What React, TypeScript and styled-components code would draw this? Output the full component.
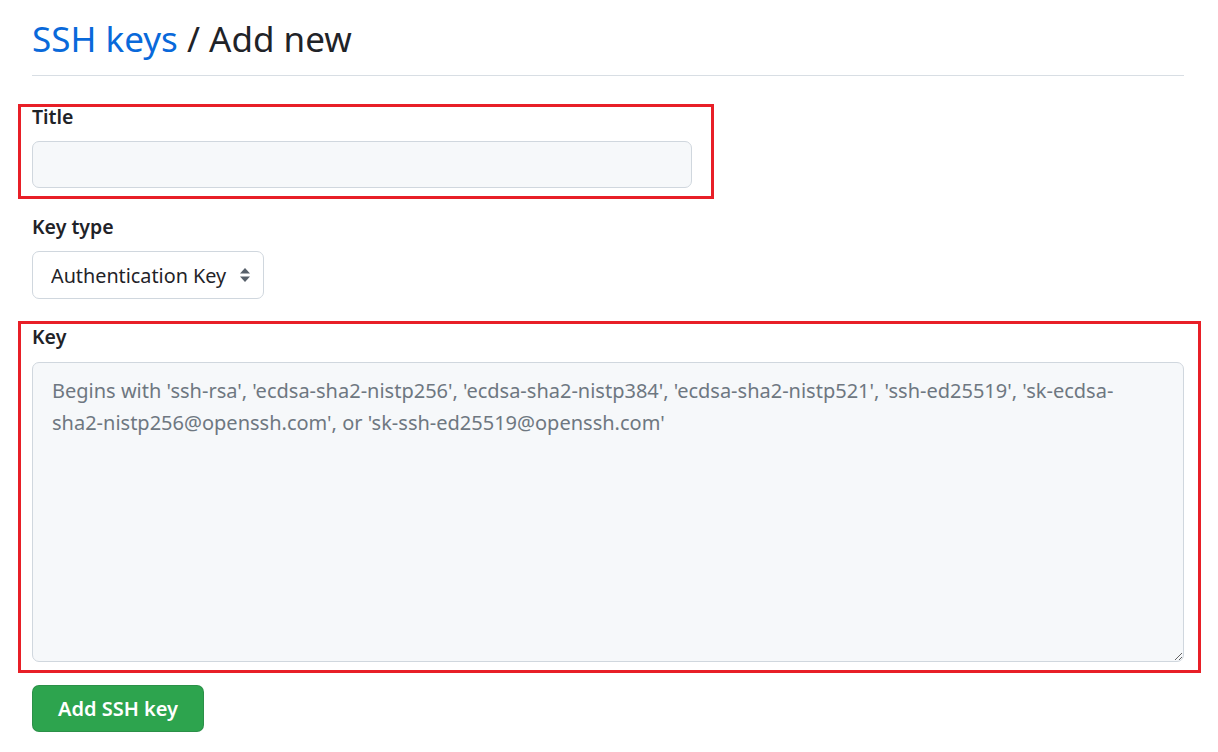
import React from "react";
import styled, { createGlobalStyle } from "styled-components";

const GlobalStyle = createGlobalStyle`
  body {
    margin: 0;
    background: #ffffff;
    font-family: "Noto Sans", "Liberation Sans", sans-serif;
    color: #1f2328;
  }
`;

const Page = styled.div`
  width: 1152px;
  padding-left: 32px;
  display: flex;
  flex-direction: column;
`;

const Header = styled.div`
  padding: 18px 0 15px;
  border-bottom: 1px solid #d8dee4;
`;

const Heading = styled.h1`
  margin: 0;
  font-size: 35px;
  font-weight: 400;
  line-height: 42px;
  color: #1f2328;
  & a {
    color: #0969da;
    text-decoration: none;
  }
`;

const Form = styled.form`
  display: flex;
  flex-direction: column;
  align-items: flex-start;
`;

// $highlight draws the red annotation frame round a field
const FieldGroup = styled.div<{
  $highlight?: boolean;
  $top: number;
  $padTop?: number;
  $width?: number;
}>`
  display: flex;
  flex-direction: column;
  margin-top: ${(p) => p.$top}px;
  box-sizing: border-box;
  ${(p) =>
    p.$highlight
      ? `
    border: 3px solid #e81f27;
    margin-left: -14px;
    padding: ${p.$padTop ?? 0}px 11px 8px;
  `
      : ""}
  width: ${(p) => (p.$width ? `${p.$width}px` : "auto")};
`;

const Label = styled.label<{ $gap?: number }>`
  font-size: 19.5px;
  font-weight: 600;
  line-height: 20px;
  color: #1f2328;
  margin-bottom: ${(p) => p.$gap ?? 14}px;
`;

const TextInput = styled.input`
  box-sizing: border-box;
  width: 660px;
  height: 47px;
  background: #f6f8fa;
  border: 1px solid #d0d7de;
  border-radius: 7px;
  font-family: inherit;
  font-size: 19px;
  padding: 0 19px;
  outline: none;
`;

const SelectWrap = styled.div`
  position: relative;
  width: 232px;
`;

const Select = styled.select`
  appearance: none;
  box-sizing: border-box;
  width: 232px;
  height: 48px;
  background: #ffffff;
  border: 1px solid #d0d7de;
  border-radius: 7px;
  font-family: inherit;
  font-size: 19.8px;
  color: #1f2328;
  padding: 0 30px 0 18px;
  outline: none;
`;

const SelectArrow = styled.svg`
  position: absolute;
  right: 13px;
  top: 16px;
  pointer-events: none;
`;

const KeyArea = styled.textarea`
  box-sizing: border-box;
  width: 1152px;
  height: 300px;
  background: #f6f8fa;
  border: 1px solid #d0d7de;
  border-radius: 7px;
  font-family: inherit;
  font-size: 20px;
  line-height: 32px;
  padding: 12px 30px 12px 19px;
  color: #1f2328;
  outline: none;
  resize: vertical;
  &::placeholder {
    color: #6e7781;
  }
`;

const SubmitButton = styled.button`
  margin-top: 12px;
  width: 172px;
  height: 47px;
  background: #2da44e;
  border: 1px solid rgba(31, 35, 40, 0.15);
  border-radius: 7px;
  color: #ffffff;
  font-family: inherit;
  font-size: 20px;
  font-weight: 600;
  cursor: pointer;
`;

const placeholder =
  "Begins with 'ssh-rsa', 'ecdsa-sha2-nistp256', 'ecdsa-sha2-nistp384', 'ecdsa-sha2-nistp521', 'ssh-ed25519', 'sk-ecdsa-sha2-nistp256@openssh.com', or 'sk-ssh-ed25519@openssh.com'";

export default function App() {
  return (
    <>
      <GlobalStyle />
      <Page>
        <Header>
          <Heading>
            <a href="#">SSH keys</a> / Add new
          </Heading>
        </Header>
        <Form onSubmit={(e) => e.preventDefault()}>
          <FieldGroup $highlight $top={28} $padTop={0} $width={696}>
            <Label htmlFor="title">Title</Label>
            <TextInput id="title" type="text" />
          </FieldGroup>
          <FieldGroup $top={18}>
            <Label htmlFor="type">Key type</Label>
            <SelectWrap>
              <Select id="type" defaultValue="auth">
                <option value="auth">Authentication Key</option>
                <option value="signing">Signing Key</option>
              </Select>
              <SelectArrow width="12" height="16" viewBox="0 0 12 16">
                <path d="M6 1 L11 6.5 H1 Z" fill="#57606a" />
                <path d="M6 15 L11 9.5 H1 Z" fill="#57606a" />
              </SelectArrow>
            </SelectWrap>
          </FieldGroup>
          <FieldGroup $highlight $top={22} $padTop={3} $width={1183}>
            <Label htmlFor="key" $gap={15}>
              Key
            </Label>
            <KeyArea id="key" placeholder={placeholder} />
          </FieldGroup>
          <SubmitButton type="submit">Add SSH key</SubmitButton>
        </Form>
      </Page>
    </>
  );
}
